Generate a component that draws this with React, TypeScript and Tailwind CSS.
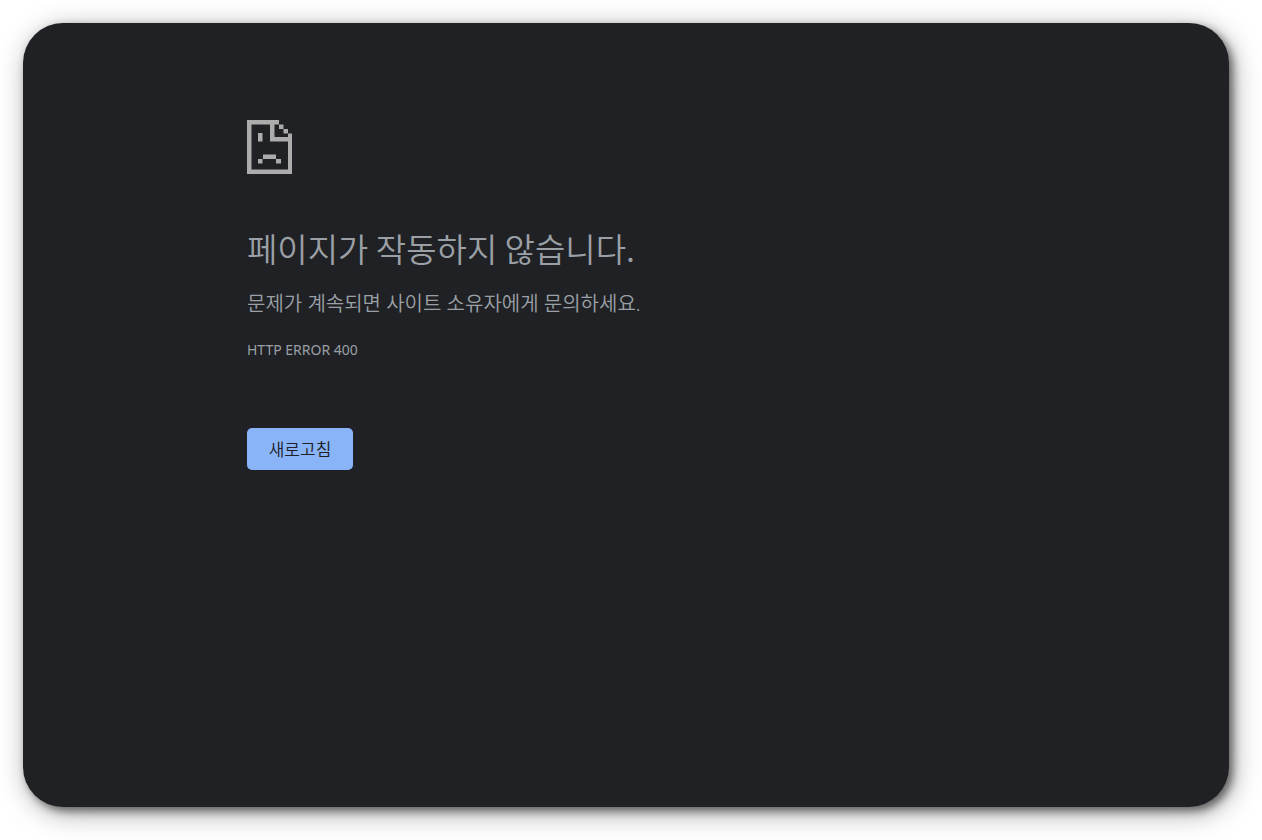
import { useState } from "react";

function SadPageIcon() {
	return (
		<svg
			className="block w-[45px] h-[54px]"
			viewBox="0 0 45 54"
			fill="#acacac"
			aria-hidden="true"
		>
			{/* sheet outline */}
			<path d="M0 0H32V4.5H27.5V17H41V13.5H45V54H0ZM4.5 4.5V49.5H41V21.5H23V4.5Z" />
			{/* folded corner */}
			<path d="M32 4.5H36.5V9H32ZM36.5 9H41V13.5H36.5Z" />
			{/* face */}
			<path d="M11 13H15.5V21.5H11ZM16 34.5H29V39H16ZM11 39H15.5V43.5H11ZM29 39H34V43.5H29Z" />
		</svg>
	);
}

export default function App() {
	const [attempt, setAttempt] = useState(0);

	return (
		<div className="min-h-screen flex flex-col bg-white pt-[23px] pl-[23px] pr-[33px] pb-[33px]">
			<main
				key={attempt}
				className="grow flex flex-col items-start rounded-[40px] bg-[#202124] px-56 pt-[97px] pb-24 text-[#9aa0a6] shadow-[4px_4px_8px_rgba(0,0,0,0.5),4px_6px_28px_rgba(0,0,0,0.35)] font-['Noto_Sans','Noto_Sans_CJK_KR',sans-serif]"
			>
				<SadPageIcon />
				<h1 className="mt-[54px] text-[33px] leading-10 font-[350] font-['Noto_Sans_CJK_KR',sans-serif]">
					페이지가 작동하지 않습니다.
				</h1>
				<p className="mt-6 text-[20px] leading-6 font-[350]">
					문제가 계속되면 사이트 소유자에게 문의하세요.
				</p>
				<p className="mt-6 text-[14px] leading-5">HTTP ERROR 400</p>
				<button
					type="button"
					className="mt-[68px] h-[42px] w-[106px] rounded-[5px] bg-[#8ab4f8] pt-[2px] text-[17px] font-[350] text-[#202124]"
					onClick={() => setAttempt(attempt + 1)}
				>
					새로고침
				</button>
			</main>
		</div>
	);
}
